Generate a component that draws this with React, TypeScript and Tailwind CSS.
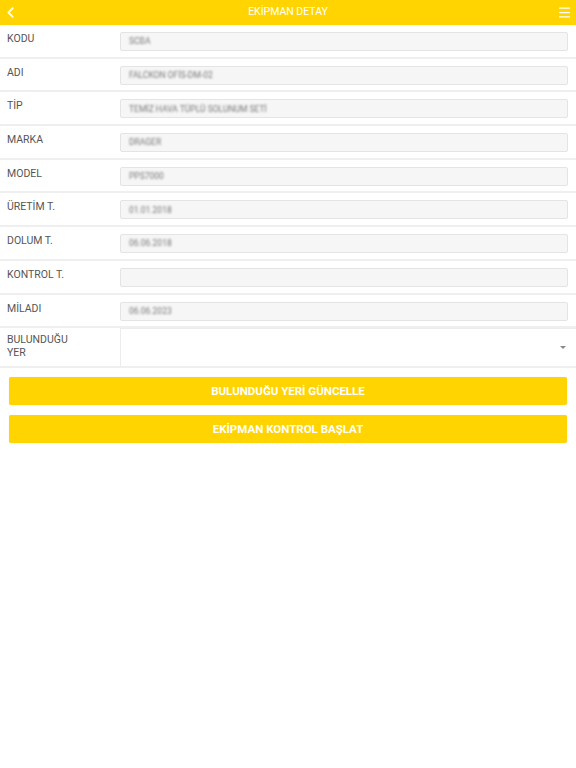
import { ChevronLeft, Menu } from "lucide-react";

const fields = [
  { label: "KODU", value: "SCBA" },
  { label: "ADI", value: "FALCKON OFİS-DM-02" },
  { label: "TİP", value: "TEMİZ HAVA TÜPLÜ SOLUNUM SETİ" },
  { label: "MARKA", value: "DRAGER" },
  { label: "MODEL", value: "PPS7000" },
  { label: "ÜRETİM T.", value: "01.01.2018" },
  { label: "DOLUM T.", value: "06.06.2018" },
  { label: "KONTROL T.", value: "" },
  { label: "MİLADI", value: "06.06.2023" },
];

export default function App() {
  return (
    <div className="min-h-[768px] bg-white font-['Roboto','Liberation_Sans',Arial,sans-serif]">
      {/* Header */}
      <div className="flex h-[25px] items-center justify-between bg-[#ffd400] pl-[2px] pr-[4px] text-white">
        <ChevronLeft className="h-[17px] w-[17px]" strokeWidth={2.6} />
        <span className="text-[10.5px] leading-none">EKİPMAN DETAY</span>
        <Menu className="h-[15px] w-[15px]" strokeWidth={2} />
      </div>

      {fields.map((f, i) => (
        <div
          key={i}
          className="flex h-[33.7px] items-start border-b-2 border-[#efefef] pl-[7px] pr-[8px] pt-[7px]"
        >
          <span className="w-[113px] pt-[1px] text-[10.5px] leading-[12px] text-[#555]">{f.label}</span>
          <div className="flex h-[19px] flex-1 items-center rounded-[2px] border border-[#e4e4e4] bg-[#f6f6f6] pl-[8px]">
            <span className="text-[8.5px] text-[#777] blur-[1px]">{f.value}</span>
          </div>
        </div>
      ))}

      {/* Location select */}
      <div className="flex h-[40px] border-b-2 border-[#efefef] pl-[7px]">
        <span className="w-[113px] pt-[5px] text-[10.5px] leading-[13px] text-[#555]">
          BULUNDUĞU
          <br />
          YER
        </span>
        <div className="flex flex-1 items-center justify-end border-l border-t border-[#ececec] pr-[10px]">
          <span className="h-0 w-0 border-x-[3px] border-t-[3px] border-x-transparent border-t-[#888]" />
        </div>
      </div>

      {/* Actions */}
      <div className="flex flex-col gap-[10px] px-[9px] pt-[9px]">
        <button className="h-[28px] rounded-[2px] bg-[#ffd400] text-[11.5px] font-bold text-white shadow-[0_0_1px_rgba(0,0,0,0.15)]">
          BULUNDUĞU YERİ GÜNCELLE
        </button>
        <button className="h-[28px] rounded-[2px] bg-[#ffd400] text-[11.5px] font-bold text-white shadow-[0_0_1px_rgba(0,0,0,0.15)]">
          EKİPMAN KONTROL BAŞLAT
        </button>
      </div>
    </div>
  );
}
